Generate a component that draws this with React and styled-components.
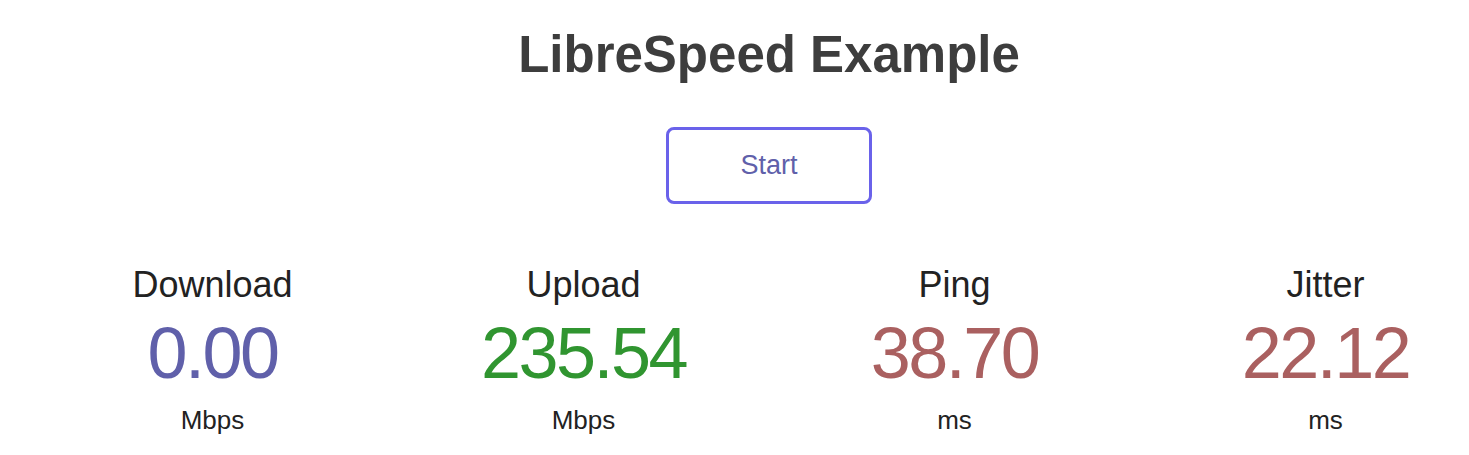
import React from "react";
import styled, { createGlobalStyle } from "styled-components";

const Global = createGlobalStyle`
  html, body { margin: 0; padding: 0; background: #fff; overflow: hidden; }
  body { font-family: "Liberation Sans", Arial, sans-serif; }
`;

const Page = styled.div`
  width: 1538px;
  display: flex;
  flex-direction: column;
  align-items: center;
  padding-top: 25px;
`;

const Title = styled.h1`
  margin: 0;
  font-size: 51px;
  line-height: 60px;
  font-weight: 700;
  color: #3d3d3d;
`;

const StartButton = styled.button`
  margin-top: 42px;
  width: 206px;
  height: 77px;
  box-sizing: border-box;
  border: 3px solid #6a62ea;
  border-radius: 8px;
  background: transparent;
  color: #6060aa;
  font-family: "Liberation Sans", Arial, sans-serif;
  font-size: 27px;
  cursor: pointer;
  padding: 0;
`;

const Grid = styled.div`
  margin-top: 61px;
  display: grid;
  grid-template-columns: repeat(4, 371px);
  justify-content: center;
`;

const TestArea = styled.div`
  display: flex;
  flex-direction: column;
  align-items: center;
`;

const TestName = styled.div`
  font-size: 36px;
  line-height: 40px;
  color: #222;
`;

const Meter = styled.div`
  margin-top: 12px;
  font-size: 72px;
  line-height: 72px;
  letter-spacing: -2.5px;
  color: ${(p) => p.$color};
`;

const Unit = styled.div`
  margin-top: 16px;
  font-size: 26px;
  line-height: 30px;
  color: #222;
`;

const tests = [
  { name: "Download", value: "0.00", unit: "Mbps", color: "#6060aa" },
  { name: "Upload", value: "235.54", unit: "Mbps", color: "#309530" },
  { name: "Ping", value: "38.70", unit: "ms", color: "#aa6060" },
  { name: "Jitter", value: "22.12", unit: "ms", color: "#aa6060" },
];

export default function App() {
  return (
    <>
      <Global />
      <Page>
        <Title>LibreSpeed Example</Title>
        <StartButton>Start</StartButton>
        <Grid>
          {tests.map((t) => (
            <TestArea key={t.name}>
              <TestName>{t.name}</TestName>
              <Meter $color={t.color}>{t.value}</Meter>
              <Unit>{t.unit}</Unit>
            </TestArea>
          ))}
        </Grid>
      </Page>
    </>
  );
}
